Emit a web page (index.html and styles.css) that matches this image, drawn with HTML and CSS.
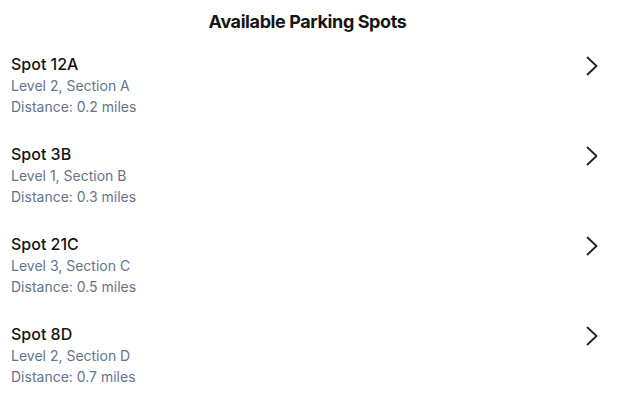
FILE: index.html
```html
<!DOCTYPE html>
<html>
<head>
<meta charset="utf-8">
<link rel="stylesheet" href="styles.css">
</head>
<body>
<div class="page">
  <h1 class="title">Available Parking Spots</h1>
  <ul class="list">
    <li class="row">
      <div class="info">
        <div class="name">Spot 12A</div>
        <div class="sub">Level 2, Section A</div>
        <div class="sub">Distance: 0.2 miles</div>
      </div>
      <svg class="chev" viewBox="0 0 12 20" width="12" height="20"><path d="M1.5 1.5 L10.5 10 L1.5 18.5" fill="none" stroke="#1f1f1f" stroke-width="1.8" stroke-linecap="round" stroke-linejoin="round"/></svg>
    </li>
    <li class="row">
      <div class="info">
        <div class="name">Spot 3B</div>
        <div class="sub">Level 1, Section B</div>
        <div class="sub">Distance: 0.3 miles</div>
      </div>
      <svg class="chev" viewBox="0 0 12 20" width="12" height="20"><path d="M1.5 1.5 L10.5 10 L1.5 18.5" fill="none" stroke="#1f1f1f" stroke-width="1.8" stroke-linecap="round" stroke-linejoin="round"/></svg>
    </li>
    <li class="row">
      <div class="info">
        <div class="name">Spot 21C</div>
        <div class="sub">Level 3, Section C</div>
        <div class="sub">Distance: 0.5 miles</div>
      </div>
      <svg class="chev" viewBox="0 0 12 20" width="12" height="20"><path d="M1.5 1.5 L10.5 10 L1.5 18.5" fill="none" stroke="#1f1f1f" stroke-width="1.8" stroke-linecap="round" stroke-linejoin="round"/></svg>
    </li>
    <li class="row">
      <div class="info">
        <div class="name">Spot 8D</div>
        <div class="sub">Level 2, Section D</div>
        <div class="sub">Distance: 0.7 miles</div>
      </div>
      <svg class="chev" viewBox="0 0 12 20" width="12" height="20"><path d="M1.5 1.5 L10.5 10 L1.5 18.5" fill="none" stroke="#1f1f1f" stroke-width="1.8" stroke-linecap="round" stroke-linejoin="round"/></svg>
    </li>
  </ul>
</div>
</body>
</html>
```
FILE: styles.css
```css
html, body {
  margin: 0;
  padding: 0;
  background: #ffffff;
}
body {
  font-family: Inter, "Noto Sans", sans-serif;
  color: #141414;
}
.page {
  width: 619px;
}
.title {
  margin: 0;
  padding: 8px 4px 3px 0;
  font-size: 18px;
  line-height: 28px;
  font-weight: 700;
  text-align: center;
  letter-spacing: -0.4px;
  color: #161616;
}
.list {
  list-style: none;
  margin: 0;
  padding: 0;
}
.row {
  display: flex;
  align-items: flex-start;
  justify-content: space-between;
  padding: 13px 21px 12px 11px;
}
.info {
  display: flex;
  flex-direction: column;
}
.name {
  font-size: 16px;
  line-height: 24px;
  font-weight: 500;
  letter-spacing: 0;
  color: #141414;
}
.sub {
  font-size: 14px;
  line-height: 20px;
  letter-spacing: 0;
  color: #64748b;
}
.sub + .sub {
  margin-top: 1px;
}
.chev {
  margin-top: 4px;
}
```
